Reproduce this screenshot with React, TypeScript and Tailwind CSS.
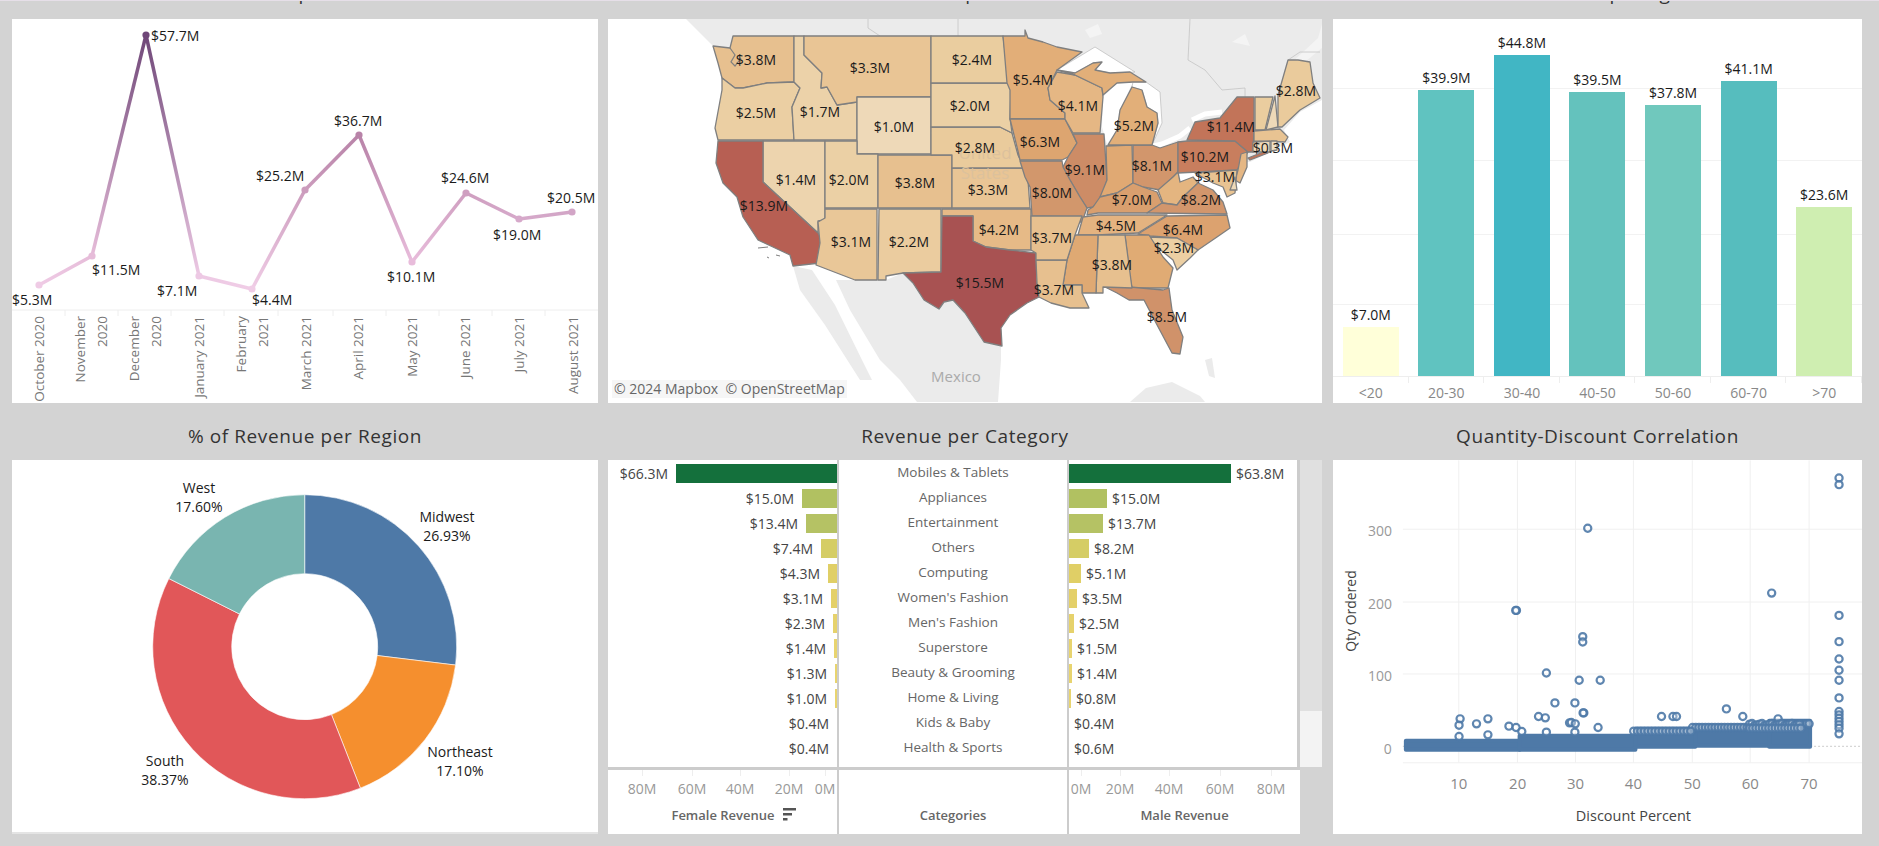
import React from 'react';

const font = { fontFamily: '"Open Sans", sans-serif' };

// ---------- line chart ----------
const months = [
    { x: 39, y: 285, c: '#efcbe5', label: '$5.3M', lx: 12, ly: 300, axis: ['October 2020'], ax: 39 },
    { x: 92, y: 256, c: '#e6bcd9', label: '$11.5M', lx: 92, ly: 270, axis: ['November', '2020'], ax: 80 },
    { x: 146, y: 35, c: '#6f4778', label: '$57.7M', lx: 151, ly: 36, axis: ['December', '2020'], ax: 134 },
    { x: 199, y: 276, c: '#edc9e4', label: '$7.1M', lx: 157, ly: 291, axis: ['January 2021'], ax: 199 },
    { x: 252, y: 289, c: '#f0cde6', label: '$4.4M', lx: 252, ly: 300, axis: ['February', '2021'], ax: 241 },
    { x: 305, y: 190, c: '#cc9cbd', label: '$25.2M', lx: 256, ly: 176, axis: ['March 2021'], ax: 306 },
    { x: 359, y: 135, c: '#b883a8', label: '$36.7M', lx: 334, ly: 121, axis: ['April 2021'], ax: 358 },
    { x: 412, y: 262, c: '#e8bcdb', label: '$10.1M', lx: 387, ly: 277, axis: ['May 2021'], ax: 412 },
    { x: 466, y: 193, c: '#cf9fc0', label: '$24.6M', lx: 441, ly: 178, axis: ['June 2021'], ax: 465 },
    { x: 519, y: 219, c: '#d6a9ca', label: '$19.0M', lx: 493, ly: 235, axis: ['July 2021'], ax: 519 },
    { x: 572, y: 212, c: '#d2a5c6', label: '$20.5M', lx: 547, ly: 198, axis: ['August 2021'], ax: 573 },
];
const monthTicks = [65, 118, 171, 224, 278, 333, 386, 439, 492, 545];

const LineChart = () => (
    <svg viewBox="12 19 586 384" className="block w-full h-full" style={font}>
        <defs>
            {months.slice(1).map((m, i) => (
                <linearGradient key={i} id={`seg${i}`} gradientUnits="userSpaceOnUse" x1={months[i].x} y1={months[i].y} x2={m.x} y2={m.y}>
                    <stop offset="0" stopColor={months[i].c} />
                    <stop offset="1" stopColor={m.c} />
                </linearGradient>
            ))}
        </defs>
        <line x1="12" y1="310" x2="598" y2="310" stroke="#eeeeee" />
        {monthTicks.map(t => <line key={t} x1={t} y1="310" x2={t} y2="316" stroke="#eeeeee" />)}
        {months.slice(1).map((m, i) => (
            <line key={i} x1={months[i].x} y1={months[i].y} x2={m.x} y2={m.y} stroke={`url(#seg${i})`} strokeWidth="3.5" />
        ))}
        {months.map(m => <circle key={m.x} cx={m.x} cy={m.y} r="3.6" fill={m.c} />)}
        {months.map(m => (
            <text key={m.label} x={m.lx} y={m.ly + 5} fontSize="14" fill="#1a1a1a">{m.label}</text>
        ))}
        {months.map(m => m.axis.map((line, i) => (
            <text key={line + m.ax} transform={`translate(${m.ax + 5 + i * 22} 316) rotate(-90)`} textAnchor="end" fontSize="13.5" fill="#777777">{line}</text>
        )))}
    </svg>
);

// ---------- map ----------
const states: { v: string; c: string; p: string }[] = [
    { v: 'WA', c: '#e7c08f', p: '733,36 794,36 794,82 767,83 743,88 735,88 722,78 718,63 713,46 730,48' },
    { v: 'OR', c: '#ebcfa3', p: '722,78 735,88 743,88 767,83 794,82 800,88 792,107 794,140 718,140 715,128 722,90' },
    { v: 'ID', c: '#ecd2a9', p: '794,36 804,36 804,55 822,73 821,88 827,87 837,105 857,102 857,140 794,140 792,107 800,88 794,82' },
    { v: 'MT', c: '#e9c595', p: '804,36 931,36 931,97 857,97 857,102 837,105 827,87 821,88 822,73 804,55' },
    { v: 'WY', c: '#eed9b8', p: '857,97 931,97 931,154 857,154' },
    { v: 'NV', c: '#edd4ae', p: '763,141 825,141 825,220 818,221 818,233 763,182' },
    { v: 'CA', c: '#b75f53', p: '718,141 763,141 763,182 818,233 824,243 820,250 820,263 793,266 790,255 758,240 743,217 737,197 723,183 716,163' },
    { v: 'UT', c: '#ebd0a5', p: '825,141 857,141 857,154 878,154 878,208 825,208' },
    { v: 'CO', c: '#e7c08f', p: '878,155 952,155 952,208 878,208' },
    { v: 'AZ', c: '#e9c798', p: '825,209 877,209 877,280 855,280 816,265 820,243 818,222 825,218' },
    { v: 'NM', c: '#ebcc9f', p: '879,209 941,209 941,272 903,273 886,276 886,280 878,280' },
    { v: 'OK', c: '#e6ba87', p: '942,209 1031,209 1031,250 1010,250 986,247 973,241 973,216 942,216' },
    { v: 'TX', c: '#a85252', p: '942,216 973,216 973,241 986,247 1010,250 1036,253 1037,283 1039,297 1027,303 1010,315 1001,328 1002,346 984,342 965,313 953,300 944,302 939,309 924,300 913,283 903,273 941,272' },
    { v: 'KS', c: '#e9c595', p: '952,168 1024,168 1028,180 1030,208 952,208' },
    { v: 'NE', c: '#eacb9c', p: '931,127 1000,127 1012,133 1018,155 1024,168 952,168 952,155 931,155' },
    { v: 'SD', c: '#ebd0a5', p: '931,83 1009,83 1011,90 1010,118 1012,133 1000,127 931,127' },
    { v: 'ND', c: '#eacd9f', p: '931,36 1003,36 1009,83 931,83' },
    { v: 'MN', c: '#e2ae78', p: '1003,36 1025,36 1025,30 1028,38 1043,42 1057,47 1082,52 1057,70 1048,88 1050,100 1065,113 1065,119 1010,119 1010,90 1007,83' },
    { v: 'IA', c: '#dda570', p: '1010,119 1065,119 1077,143 1068,157 1062,160 1020,160 1017,147' },
    { v: 'WI', c: '#e5b784', p: '1057,72 1075,75 1102,88 1103,97 1100,133 1073,133 1065,119 1065,113 1050,100 1048,88' },
    { v: 'IL', c: '#cd8c66', p: '1073,134 1104,134 1107,180 1102,197 1093,207 1087,208 1080,197 1070,180 1063,167 1068,157 1077,143' },
    { v: 'MO', c: '#d2976c', p: '1020,161 1062,161 1063,167 1070,180 1080,197 1087,208 1082,222 1078,222 1077,217 1032,216 1030,187 1025,177' },
    { v: 'IN', c: '#e0a973', p: '1106,146 1132,145 1133,183 1117,193 1100,197 1107,180' },
    { v: 'OH', c: '#d2966c', p: '1133,145 1152,145 1160,148 1178,142 1178,172 1173,177 1160,190 1143,187 1133,183' },
    { v: 'MI', c: '#e2af79', p: '1108,145 1117,130 1120,110 1132,87 1142,90 1147,107 1157,113 1158,123 1152,145' },
    { v: 'UP', c: '#e2af79', p: '1057,70 1075,73 1093,63 1102,62 1095,70 1110,73 1130,72 1146,82 1133,82 1117,83 1103,95 1102,88 1075,75' },
    { v: 'KY', c: '#d99f6e', p: '1087,215 1098,213 1147,213 1162,203 1157,192 1143,187 1133,183 1117,193 1100,197 1093,207 1088,210' },
    { v: 'WV', c: '#e4b580', p: '1158,190 1173,177 1178,172 1180,182 1193,177 1198,183 1183,197 1177,205 1163,203' },
    { v: 'VA', c: '#d2966c', p: '1147,213 1162,203 1177,205 1183,197 1198,183 1213,190 1223,202 1227,214' },
    { v: 'TN', c: '#e4b380', p: '1078,235 1083,217 1098,215 1167,215 1138,233 1097,235' },
    { v: 'NC', c: '#dca26f', p: '1138,234 1167,216 1227,215 1230,228 1217,237 1198,250 1177,238 1150,236' },
    { v: 'SC', c: '#eccfa3', p: '1148,237 1177,238 1198,250 1190,258 1177,270 1173,260 1157,247' },
    { v: 'GA', c: '#e0ab74', p: '1125,235 1149,235 1163,257 1173,268 1168,288 1132,288 1130,278' },
    { v: 'FL', c: '#d0926a', p: '1103,286 1130,287 1163,290 1169,288 1172,310 1183,337 1180,354 1172,353 1156,323 1144,300 1129,300 1117,293' },
    { v: 'AL', c: '#e7c08f', p: '1098,235 1125,235 1132,288 1103,287 1103,293 1096,293' },
    { v: 'MS', c: '#dfa973', p: '1075,235 1098,235 1096,293 1082,293 1082,285 1063,285 1067,260' },
    { v: 'LA', c: '#e7c08f', p: '1036,260 1067,260 1063,285 1082,285 1082,293 1089,308 1070,308 1051,303 1039,297 1037,283' },
    { v: 'AR', c: '#e7c08f', p: '1031,216 1082,216 1075,235 1067,260 1036,260 1036,253 1031,250' },
    { v: 'PA', c: '#c87e5e', p: '1178,142 1187,141 1235,141 1248,152 1237,170 1178,173' },
    { v: 'NY', c: '#c27459', p: '1187,140 1195,122 1220,118 1237,97 1254,97 1254,130 1253,152 1248,152 1235,141' },
    { v: 'LI', c: '#c27459', p: '1248,158 1268,150 1268,153 1250,160' },
    { v: 'NJ', c: '#e5b784', p: '1241,154 1247,152 1247,167 1240,183 1235,180 1238,170' },
    { v: 'VT', c: '#eacd9f', p: '1255,97 1273,97 1265,130 1255,130' },
    { v: 'NH', c: '#eed9b8', p: '1275,96 1278,127 1266,130' },
    { v: 'ME', c: '#eacb9c', p: '1278,127 1278,95 1288,60 1298,60 1310,62 1313,83 1320,98 1300,110 1282,127' },
    { v: 'MA', c: '#e8c392', p: '1254,131 1280,129 1288,137 1285,142 1254,141' },
    { v: 'CT', c: '#eed9b8', p: '1253,142 1270,141 1270,152 1253,152' },
    { v: 'RI', c: '#f0dfc2', p: '1271,141 1277,141 1277,150 1271,151' },
    { v: 'MD', c: '#e8c392', p: '1195,173 1237,170 1235,193 1227,197 1223,187 1213,183' },
    { v: 'DE', c: '#eed9b8', p: '1235,177 1237,190 1230,190' },
];

const mapLabels: [string, number, number][] = [
    ['$3.8M', 756, 60], ['$3.3M', 870, 68], ['$2.4M', 972, 60], ['$5.4M', 1033, 80], ['$4.1M', 1078, 106],
    ['$5.2M', 1134, 126], ['$2.8M', 1296, 91], ['$2.5M', 756, 113], ['$1.7M', 820, 112], ['$1.0M', 894, 127],
    ['$2.0M', 970, 106], ['$2.8M', 975, 148], ['$6.3M', 1040, 142], ['$11.4M', 1231, 127], ['$10.2M', 1205, 157],
    ['$0.3M', 1273, 148], ['$1.4M', 796, 180], ['$2.0M', 849, 180], ['$3.8M', 915, 183], ['$3.3M', 988, 190],
    ['$9.1M', 1085, 170], ['$8.1M', 1152, 166], ['$3.1M', 1215, 177], ['$8.0M', 1052, 193], ['$7.0M', 1132, 200],
    ['$8.2M', 1201, 200], ['$13.9M', 764, 206], ['$3.1M', 851, 242], ['$2.2M', 909, 242], ['$4.2M', 999, 230],
    ['$3.7M', 1052, 238], ['$4.5M', 1116, 226], ['$6.4M', 1183, 230], ['$2.3M', 1174, 248], ['$3.8M', 1112, 265],
    ['$15.5M', 980, 283], ['$3.7M', 1054, 290], ['$8.5M', 1167, 317],
];

const MapChart = () => (
    <div className="relative w-full h-full bg-white overflow-hidden">
        <svg viewBox="608 19 714 384" className="block w-full h-full" style={font}>
            {/* land behind the states */}
            <polygon fill="#ebebeb" points="686,19 1322,19 1322,100 1300,112 1284,130 1290,142 1250,162 1200,162 1100,145 733,100 713,46" />
            <polygon fill="#f4f4f4" points="1085,30 1098,24 1102,34 1090,38" />
            <polygon fill="#f4f4f4" points="1232,42 1245,34 1250,46" />
            <polygon fill="#f4f4f4" points="1290,64 1318,38 1322,24 1322,48 1300,66" />
            <polygon fill="#ebebeb" points="793,266 812,270 835,305 862,360 872,380 860,380 825,325 800,290" />
            <polygon fill="#ebebeb" points="836,280 886,280 903,273 1001,320 1001,360 998,402 917,402 900,380 880,360 850,310" />
            <polygon fill="#ebebeb" points="1130,402 1146,388 1172,382 1200,396 1205,402" />
            <polygon fill="#ebebeb" points="1205,360 1212,358 1215,378 1209,376" />
            {/* lakes */}
            <polygon fill="#ffffff" stroke="#b0b0b0" strokeWidth="0.6" points="1057,70 1095,47 1135,72 1110,73 1095,70 1102,62 1093,63 1075,73" />
            <polygon fill="#ffffff" points="1103,97 1117,83 1133,82 1120,110 1117,130 1107,144 1102,127" />
            <polygon fill="#ffffff" stroke="#b0b0b0" strokeWidth="0.6" points="1133,82 1146,82 1160,92 1162,123 1152,145 1158,123 1157,113 1147,107 1142,90 1132,87" />
            <polyline fill="none" stroke="#ffffff" strokeWidth="5" points="1153,146 1162,144 1180,136 1190,128" />
            <polyline fill="none" stroke="#ffffff" strokeWidth="5" points="1192,120 1205,114 1222,112" />
            {/* borders on the basemap */}
            <polyline fill="none" stroke="#c4c4c4" strokeWidth="0.8" points="868,19 868,28 880,36" />
            <line x1="958" y1="19" x2="958" y2="36" stroke="#c4c4c4" strokeWidth="0.8" />
            <polyline fill="none" stroke="#c4c4c4" strokeWidth="0.8" points="1190,19 1188,60 1205,70 1222,90 1245,88 1245,97" />
            <polyline fill="none" stroke="#c4c4c4" strokeWidth="0.8" points="1288,60 1300,52 1320,52" />
            {states.map(s => (
                <polygon key={s.v} points={s.p} fill={s.c} stroke="#7f7f7f" strokeWidth="1.3" strokeLinejoin="round" />
            ))}
            {/* puget sound and the channel islands */}
            <polyline fill="none" stroke="#7f7f7f" strokeWidth="1.2" points="730,48 735,55 731,62 735,66 741,58" />
            <polyline fill="none" stroke="#7f7f7f" strokeWidth="1" points="758,248 768,247" />
            <polyline fill="none" stroke="#7f7f7f" strokeWidth="1" points="776,255 780,256" />
            <polyline fill="none" stroke="#7f7f7f" strokeWidth="1" points="767,257 769,258" />
            <text x="985" y="159" textAnchor="middle" fontSize="17" fill="#dcc19c">United</text>
            <text x="985" y="179" textAnchor="middle" fontSize="17" fill="#dcc19c">States</text>
            <text x="956" y="382" textAnchor="middle" fontSize="15" fill="#aaaaaa">Mexico</text>
            {mapLabels.map(([t, x, y]) => (
                <text key={t + x} x={x} y={y + 5} textAnchor="middle" fontSize="14" fill="#1a1a1a">{t}</text>
            ))}
        </svg>
        <div className="absolute left-[4px] bottom-[5px] px-[2px] bg-[#f6f6f6] text-[#666666] text-[14px] leading-[18px] whitespace-pre" style={font}>© 2024 Mapbox  © OpenStreetMap</div>
    </div>
);

// ---------- age bars ----------
const ageBars = [
    { age: '<20', label: '$7.0M', h: 49, c: 'bg-[#ffffd9]' },
    { age: '20-30', label: '$39.9M', h: 286, c: 'bg-[#60c3c0]' },
    { age: '30-40', label: '$44.8M', h: 321, c: 'bg-[#41b6c4]' },
    { age: '40-50', label: '$39.5M', h: 284, c: 'bg-[#64c2bd]' },
    { age: '50-60', label: '$37.8M', h: 271, c: 'bg-[#70c8bd]' },
    { age: '60-70', label: '$41.1M', h: 295, c: 'bg-[#56bdbe]' },
    { age: '>70', label: '$23.6M', h: 169, c: 'bg-[#cfeeb1]' },
];

const AgeChart = () => (
    <div className="relative w-full h-full bg-white flex flex-col overflow-hidden" style={font}>
        <div className="absolute inset-x-0 top-[69px] h-[1px] bg-[#f2f2f2]" />
        <div className="absolute inset-x-0 top-[141px] h-[1px] bg-[#f2f2f2]" />
        <div className="absolute inset-x-0 top-[215px] h-[1px] bg-[#f2f2f2]" />
        <div className="absolute inset-x-0 top-[285px] h-[1px] bg-[#f2f2f2]" />
        <div className="relative shrink-0 grid grid-cols-7 h-[358px] border-b border-[#eeeeee]">
            {ageBars.map(b => (
                <div key={b.age} className="flex flex-col justify-end items-center">
                    <span className="text-[14px] leading-[20px] mb-[2px] text-[#1a1a1a]">{b.label}</span>
                    <div className={`w-[56px] ${b.c}`} style={{ height: b.h }} />
                </div>
            ))}
        </div>
        <div className="grid grid-cols-7 flex-1 min-h-0">
            {ageBars.map(b => (
                <div key={b.age} className="relative text-center text-[14px] leading-[20px] pt-[6px] text-[#888888]">
                    <span className="absolute right-0 top-0 w-[1px] h-[6px] bg-[#eeeeee]" />
                    {b.age}
                </div>
            ))}
        </div>
    </div>
);

// ---------- donut ----------
const donut = [
    { name: 'Midwest', pct: 26.93, c: '#4e79a7', lx: 447, ly: 517 },
    { name: 'Northeast', pct: 17.1, c: '#f58f2e', lx: 460, ly: 752 },
    { name: 'South', pct: 38.37, c: '#e15759', lx: 165, ly: 761 },
    { name: 'West', pct: 17.6, c: '#79b5b0', lx: 199, ly: 488 },
];
const CX = 304.7;
const CY = 646.7;

const arc = (from: number, to: number) => {
    const pt = (pct: number, r: number) => {
        const a = (pct / 100) * Math.PI * 2;
        return `${(CX + r * Math.sin(a)).toFixed(2)} ${(CY - r * Math.cos(a)).toFixed(2)}`;
    };
    const big = to - from > 50 ? 1 : 0;
    return `M${pt(from, 152)} A152 152 0 ${big} 1 ${pt(to, 152)} L${pt(to, 73)} A73 73 0 ${big} 0 ${pt(from, 73)} Z`;
};

const DonutChart = () => {
    let acc = 0;
    return (
        <svg viewBox="12 460 586 372" className="block w-full h-full" style={font}>
            {donut.map(d => {
                const start = acc;
                acc += d.pct;
                return <path key={d.name} d={arc(start, acc)} fill={d.c} stroke="#ffffff" strokeWidth="0.6" />;
            })}
            {donut.map(d => (
                <g key={d.name} textAnchor="middle" fontSize="14" fill="#1a1a1a">
                    <text x={d.lx} y={d.ly + 5}>{d.name}</text>
                    <text x={d.lx} y={d.ly + 24}>{d.pct.toFixed(2)}%</text>
                </g>
            ))}
        </svg>
    );
};

// ---------- butterfly chart ----------
const categories = [
    { name: 'Mobiles & Tablets', f: '$66.3M', fw: 161, fc: 'bg-[#14703c]', m: '$63.8M', mw: 162, mc: 'bg-[#14703c]' },
    { name: 'Appliances', f: '$15.0M', fw: 35, fc: 'bg-[#b1c161]', m: '$15.0M', mw: 38, mc: 'bg-[#b1c161]' },
    { name: 'Entertainment', f: '$13.4M', fw: 31, fc: 'bg-[#b5c264]', m: '$13.7M', mw: 34, mc: 'bg-[#b5c264]' },
    { name: 'Others', f: '$7.4M', fw: 16, fc: 'bg-[#d5cd65]', m: '$8.2M', mw: 20, mc: 'bg-[#d5cd65]' },
    { name: 'Computing', f: '$4.3M', fw: 9, fc: 'bg-[#e0cf66]', m: '$5.1M', mw: 12, mc: 'bg-[#e0cf66]' },
    { name: "Women's Fashion", f: '$3.1M', fw: 6, fc: 'bg-[#e4d069]', m: '$3.5M', mw: 8, mc: 'bg-[#e4d069]' },
    { name: "Men's Fashion", f: '$2.3M', fw: 4, fc: 'bg-[#e6d26c]', m: '$2.5M', mw: 5, mc: 'bg-[#e6d26c]' },
    { name: 'Superstore', f: '$1.4M', fw: 3, fc: 'bg-[#e8d46f]', m: '$1.5M', mw: 3, mc: 'bg-[#e8d46f]' },
    { name: 'Beauty & Grooming', f: '$1.3M', fw: 2, fc: 'bg-[#e8d46f]', m: '$1.4M', mw: 3, mc: 'bg-[#e8d46f]' },
    { name: 'Home & Living', f: '$1.0M', fw: 2, fc: 'bg-[#e8d46f]', m: '$0.8M', mw: 2, mc: 'bg-[#e8d46f]' },
    { name: 'Kids & Baby', f: '$0.4M', fw: 0, fc: 'bg-[#e8d46f]', m: '$0.4M', mw: 0, mc: 'bg-[#e8d46f]' },
    { name: 'Health & Sports', f: '$0.4M', fw: 0, fc: 'bg-[#e8d46f]', m: '$0.6M', mw: 0, mc: 'bg-[#e8d46f]' },
];

const axisLeft: [string, number][] = [['80M', 34], ['60M', 84], ['40M', 132], ['20M', 181], ['0M', 217]];
const axisRight: [string, number][] = [['0M', 12], ['20M', 51], ['40M', 100], ['60M', 151], ['80M', 202]];

const AxisLabels = ({ items }: { items: [string, number][] }) => (
    <div className="relative h-[36px]">
        {items.map(([t, x]) => (
            <React.Fragment key={t}>
                <span className="absolute top-0 w-[1px] h-[6px] bg-[#eeeeee]" style={{ left: x }} />
                <span className="absolute top-[9px] -translate-x-1/2 text-[14px] leading-[20px] text-[#999999]" style={{ left: x }}>{t}</span>
            </React.Fragment>
        ))}
    </div>
);

const CategoryChart = () => (
    <div className="w-full h-full flex flex-col" style={font}>
        <div className="flex h-[307px]">
            <div className="w-[229px] bg-white pt-[1px]">
                {categories.map(c => (
                    <div key={c.name} className="h-[25px] flex items-center justify-end gap-[8px]">
                        <span className="text-[14px] text-[#444444]">{c.f}</span>
                        <div className={`h-[19px] ${c.fc}`} style={{ width: c.fw }} />
                    </div>
                ))}
            </div>
            <div className="w-[2px] bg-[#cccccc]" />
            <div className="w-[228px] bg-white pt-[1px]">
                {categories.map(c => (
                    <div key={c.name} className="h-[25px] flex items-center justify-center text-[13.5px] text-[#666666] pb-[2px]">{c.name}</div>
                ))}
            </div>
            <div className="w-[2px] bg-[#cccccc]" />
            <div className="w-[228px] bg-white pt-[1px]">
                {categories.map(c => (
                    <div key={c.name} className="h-[25px] flex items-center gap-[5px]">
                        <div className={`h-[19px] ${c.mc}`} style={{ width: c.mw }} />
                        <span className="text-[14px] text-[#444444]">{c.m}</span>
                    </div>
                ))}
            </div>
            <div className="w-[3px] bg-[#cccccc]" />
            <div className="w-[22px] flex flex-col">
                <div className="h-[251px] bg-[#e0e0e0]" />
                <div className="flex-1 bg-[#f3f3f3]" />
            </div>
        </div>
        <div className="h-[3px] w-[692px] bg-[#cccccc]" />
        <div className="flex flex-1 w-[692px]">
            <div className="w-[229px] bg-white">
                <AxisLabels items={axisLeft} />
                <div className="flex items-center justify-center gap-[8px] text-[13px] leading-[18px] font-semibold text-[#666666] pl-[22px]">
                    Female Revenue
                    <svg viewBox="0 0 13 14" className="w-[13px] h-[14px]" fill="#555555">
                        <rect x="0" y="0" width="13" height="2.5" />
                        <rect x="0" y="5" width="9" height="2.5" />
                        <rect x="0" y="10" width="4.5" height="2.5" />
                    </svg>
                </div>
            </div>
            <div className="w-[2px] bg-[#cccccc]" />
            <div className="w-[228px] bg-white pt-[36px] text-center text-[13px] leading-[18px] font-semibold text-[#666666]">Categories</div>
            <div className="w-[2px] bg-[#cccccc]" />
            <div className="flex-1 bg-white">
                <AxisLabels items={axisRight} />
                <div className="text-center text-[13px] leading-[18px] font-semibold text-[#666666]">Male Revenue</div>
            </div>
        </div>
    </div>
);

// ---------- scatter ----------
const sx = (z: number) => 1320 + z / 2.8;
const sy = (z: number) => 410 + z / 3;

const outliers: [number, number][] = [
    [1456, 203], [1456, 223], [751, 354], [1267, 549], [1456, 616], [551, 601], [549, 601], [737, 680], [737, 696],
    [1456, 695], [1456, 747], [1456, 781], [1456, 811], [635, 789], [727, 811], [786, 811], [659, 879], [715, 879],
    [1456, 864], [740, 909], [738, 909], [1140, 897], [1186, 920], [958, 920], [990, 920], [1000, 920], [393, 927],
    [390, 946], [439, 942], [471, 927], [613, 920], [632, 924], [700, 939], [705, 938], [716, 942], [530, 949],
    [550, 953], [566, 965], [780, 953], [1285, 927], [635, 967], [1456, 905], [1456, 915], [1456, 925], [1456, 935],
    [1456, 945], [1456, 955], [1456, 972], [1365, 942], [1372, 942], [390, 980], [471, 975], [715, 967],
];

// thick stepped band where the orders pile up at low quantity
const bandSteps: [number, number, number, number][] = [
    [1406, 1520, 741, 750],
    [1520, 1636, 736, 750],
    [1636, 1696, 729, 747],
    [1696, 1770, 726, 746],
    [1770, 1811, 721, 747],
];

const ScatterChart = () => {
    const topRings: number[][] = [];
    for (let z = 1045; z < 1210; z += 9) topRings.push([z, 950 + (z % 3) * 3]);
    for (let z = 1205; z < 1350; z += 7) topRings.push([z, 941 + (z % 4) * 2]);
    for (let z = 1205; z < 1350; z += 9) topRings.push([z, 955]);
    for (let z = 880; z < 1045; z += 10) topRings.push([z, 964]);
    return (
        <svg viewBox="1333 460 530 374" className="block w-full h-full" style={font}>
            {[1459, 1517.8, 1576, 1634, 1693, 1751, 1810].map(x => (
                <line key={x} x1={x} y1="460" x2={x} y2="763" stroke="#f0f0f0" />
            ))}
            {[529, 602, 674, 763].map(y => (
                <line key={y} x1="1403" y1={y} x2="1863" y2={y} stroke="#f0f0f0" />
            ))}
            <line x1="1403" y1="746.5" x2="1863" y2="746.5" stroke="#cccccc" strokeDasharray="2 2" />
            {bandSteps.map(([a, b, t, u]) => (
                <rect key={a} x={a} y={t} width={b - a} height={u - t} fill="#4e79a7" stroke="#4e79a7" strokeWidth="4" strokeLinejoin="round" />
            ))}
            {outliers.concat(topRings as [number, number][]).map(([x, y], i) => (
                <circle key={i} cx={sx(x)} cy={sy(y)} r="3.6" fill="#ffffff" fillOpacity="0.3" stroke="#4e79a7" strokeOpacity="0.9" strokeWidth="2.2" />
            ))}
            {[['300', 531], ['200', 604], ['100', 676], ['0', 749]].map(([t, y]) => (
                <text key={t} x="1392" y={Number(y) + 5} textAnchor="end" fontSize="14" fill="#999999">{t}</text>
            ))}
            {[['10', 1459], ['20', 1518], ['30', 1576], ['40', 1634], ['50', 1693], ['60', 1751], ['70', 1810]].map(([t, x]) => (
                <text key={t} x={x} y="789" textAnchor="middle" fontSize="15" fill="#888888">{t}</text>
            ))}
            <text x="1634" y="821" textAnchor="middle" fontSize="14.5" fill="#444444">Discount Percent</text>
            <text transform="translate(1356 611) rotate(-90)" textAnchor="middle" fontSize="14" fill="#444444">Qty Ordered</text>
        </svg>
    );
};

// ---------- page ----------
const TopTitle = ({ text, className = '' }: { text: string; className?: string }) => (
    <div className={`h-[18px] overflow-hidden text-center ${className}`}>
        <div className="-mt-[20px] text-[19px] leading-[24px] tracking-[0.6px] text-[#333333]" style={font}>{text}</div>
    </div>
);

const Title = ({ text }: { text: string }) => (
    <div className="h-[57px] flex items-center justify-center text-[19px] tracking-[0.6px] text-[#333333] pt-[9px]" style={font}>{text}</div>
);

const App: React.FC = () => {
    return (
        <div className="w-[1879px] h-[846px] bg-[#d3d3d3] overflow-hidden border-t border-[#e6dfe8]">
            <div className="grid grid-cols-[586px_714px_530px] gap-x-[10px] pl-[12px]">
                <div>
                    <TopTitle text="Revenue per Month" />
                    <div className="h-[384px] bg-white"><LineChart /></div>
                    <Title text="% of Revenue per Region" />
                    <div className="h-[374px] bg-white border-b-2 border-[#e4e4e4]"><DonutChart /></div>
                </div>
                <div>
                    <TopTitle text="Revenue per State" />
                    <div className="h-[384px]"><MapChart /></div>
                    <Title text="Revenue per Category" />
                    <div className="h-[374px]"><CategoryChart /></div>
                </div>
                <div className="ml-[1px]">
                    <TopTitle text="Revenue per Age" className="pl-[10px]" />
                    <div className="h-[384px]"><AgeChart /></div>
                    <Title text="Quantity-Discount Correlation" />
                    <div className="h-[374px] bg-white"><ScatterChart /></div>
                </div>
            </div>
        </div>
    );
};

export default App;
